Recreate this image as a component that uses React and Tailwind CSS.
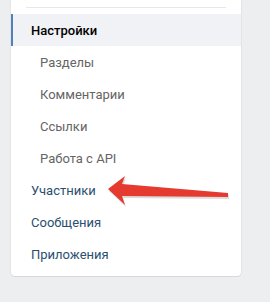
const subItems = ['Разделы', 'Комментарии', 'Ссылки', 'Работа с API'];
const mainItems = ['Участники', 'Сообщения', 'Приложения'];

export default function App() {
  return (
    <div className="relative w-[270px] h-[302px] bg-[#edeef0] font-['Roboto',sans-serif] text-[13px] leading-none">
      <div className="ml-[11px] w-[230px] bg-white rounded-b-[4px] shadow-[0_1px_0_0_#d7d8db,0_0_0_1px_#e3e4e8] pt-[7px] pb-[6px]">
        <div className="mx-[15px] h-px bg-[#e7e8ec]" />
        <div className="mt-[6px] h-[32px] flex items-center pl-[18px] border-l-2 border-[#5181b8] bg-[#f0f2f5] text-black font-medium">
          Настройки
        </div>
        {subItems.map(item => (
          <div key={item} className="h-[32px] flex items-center pl-[29px] text-[#656565]">
            {item}
          </div>
        ))}
        {mainItems.map(item => (
          <div key={item} className="h-[32px] flex items-center pl-[20px] text-[#2b4f72]">
            {item}
          </div>
        ))}
      </div>

      {/* red arrow pointing at Участники */}
      <svg className="absolute left-0 top-0" width="270" height="302" viewBox="0 0 270 302">
        <polygon
          points="109,191 126,178 123,186 229,195 229,199 123,198 126,207"
          fill="#b9b9b9"
          opacity="0.5"
        />
        <polygon
          points="108,189 125,176 122,184 228,193 228,197 122,196 125,205"
          fill="#e43a30"
        />
      </svg>
    </div>
  );
}
